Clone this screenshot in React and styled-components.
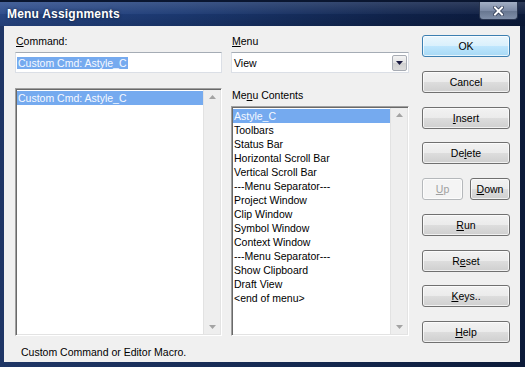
import React from "react";
import styled, { createGlobalStyle } from "styled-components";

const Global = createGlobalStyle`
  html, body {
    margin: 0;
    padding: 0;
    background: #1a2a4c;
  }
  body {
    font-family: "Liberation Sans", Arial, sans-serif;
    font-size: 10.5px;
  }
`;

const Frame = styled.div`
  width: 525px;
  height: 367px;
  box-sizing: border-box;
  display: flex;
  flex-direction: column;
  padding: 0 5px 5px 4px;
  background: linear-gradient(to right, #1f3666, #14284f 60%, #0c1a38);
`;

const TitleBar = styled.div`
  height: 26px;
  flex-shrink: 0;
  margin: 0 -5px 0 -4px;
  padding: 0 7px;
  display: flex;
  align-items: center;
  justify-content: space-between;
  position: relative;
  border-top: 2px solid #0a1630;
  box-sizing: border-box;
  background:
    linear-gradient(to bottom, rgba(255, 255, 255, 0.14), rgba(255, 255, 255, 0.03) 50%, rgba(0, 0, 0, 0.05) 51%, rgba(0, 0, 0, 0.15)),
    linear-gradient(to right, #29498a 0%, #1c3a74 35%, #10244e 75%, #0b1a3c 100%);
`;

const Title = styled.span`
  color: #ffffff;
  font-weight: bold;
  font-size: 12px;
  letter-spacing: 0.2px;
  text-shadow: 0 0 3px rgba(0, 0, 0, 0.6);
`;

const CloseButton = styled.div`
  position: absolute;
  right: 7px;
  top: 0;
  width: 37px;
  height: 17px;
  display: flex;
  align-items: center;
  justify-content: center;
  border: 1px solid #2a3650;
  border-top: none;
  border-radius: 0 0 4px 4px;
  background: linear-gradient(to bottom, #a3afc4, #7d8ba6 50%, #66758f 51%, #7f8ea8);
`;

const Body = styled.div`
  flex: 1;
  min-height: 0;
  background: #f0f0f0;
  display: flex;
  align-items: flex-start;
  padding: 8px 10px 0 11px;
`;

const MainArea = styled.div`
  display: flex;
  flex-direction: column;
  margin-right: 13px;
`;

const Columns = styled.div`
  display: flex;
  align-items: flex-start;
`;

const Column = styled.div`
  width: ${(p) => p.$w}px;
  margin-right: ${(p) => p.$mr || 0}px;
  display: flex;
  flex-direction: column;
`;

const Label = styled.div`
  height: 14px;
  line-height: 14px;
  color: #000;
  margin-top: ${(p) => p.$mt || 0}px;
  margin-bottom: 4px;
  padding-left: 1px;
`;

const TextField = styled.div`
  height: 21px;
  box-sizing: border-box;
  border: 1px solid #dbdfe6;
  border-top-color: #a5acb5;
  background: #fff;
  display: flex;
  align-items: center;
  padding-left: 1px;
`;

const Selected = styled.span`
  background: #75aaef;
  color: #f6f9ff;
  line-height: 12px;
  padding: 0 1px;
`;

const SelectBox = styled(TextField)`
  justify-content: space-between;
  padding: 0 1px 0 2px;
`;

const DropButton = styled.div`
  width: 15px;
  height: 16px;
  box-sizing: border-box;
  border: 1px solid #a8acb4;
  border-radius: 2px;
  background: linear-gradient(to bottom, #f4f4f4, #e2e2e2 50%, #d0d0d0 51%, #dcdcdc);
  display: flex;
  align-items: center;
  justify-content: center;
`;

const ListBox = styled.div`
  height: ${(p) => p.$h}px;
  margin-top: ${(p) => p.$mt || 0}px;
  box-sizing: border-box;
  border: 1px solid;
  border-color: #a0a0a0 #ffffff #ffffff #a0a0a0;
  box-shadow: inset 1px 1px 0 #696969, inset -1px -1px 0 #e3e3e3;
  background: #fff;
  display: flex;
  padding: 1px;
`;

const Items = styled.div`
  flex: 1;
  display: flex;
  flex-direction: column;
  padding-top: 1px;
`;

const Item = styled.div`
  height: 14px;
  line-height: 14px;
  padding-left: 1px;
  white-space: nowrap;
  color: ${(p) => (p.$sel ? "#f6f9ff" : "#000")};
  background: ${(p) => (p.$sel ? "#75aaef" : "transparent")};
`;

const ScrollBar = styled.div`
  width: 16px;
  background: #eeeeee;
  border-left: 1px solid #e2e2e2;
  display: flex;
  flex-direction: column;
  justify-content: space-between;
  align-items: center;
  padding: 5px 0;
`;

const Buttons = styled.div`
  width: 88px;
  margin-top: 1px;
  display: flex;
  flex-direction: column;
  gap: 13.75px;
`;

const ButtonRow = styled.div`
  display: flex;
  justify-content: space-between;
`;

const Button = styled.div`
  width: ${(p) => p.$w || 88}px;
  height: 22px;
  box-sizing: border-box;
  border: 1px solid ${(p) => (p.$default ? "#3c7fb1" : p.$disabled ? "#b5b8bb" : "#707070")};
  border-radius: 3px;
  display: flex;
  align-items: center;
  justify-content: center;
  color: ${(p) => (p.$disabled ? "#a0a0a0" : "#000")};
  box-shadow: inset 0 0 0 1px rgba(255, 255, 255, 0.7);
  background: ${(p) =>
    p.$default
      ? "linear-gradient(to bottom, #eaf6fd, #d9f0fc 50%, #bee6fd 51%, #a7d9f5)"
      : p.$disabled
      ? "#f4f4f4"
      : "linear-gradient(to bottom, #f2f2f2, #ebebeb 50%, #dddddd 51%, #cfcfcf)"};
`;

const Status = styled.div`
  margin-top: 9px;
  height: 14px;
  line-height: 14px;
  padding-left: 6px;
  color: #000;
`;

const Arrow = ({ up, color = "#a3a3a3" }) => (
  <svg width="7" height="4" viewBox="0 0 7 4">
    <path d={up ? "M0 4 L3.5 0 L7 4 Z" : "M0 0 L7 0 L3.5 4 Z"} fill={color} />
  </svg>
);

const contents = [
  "Astyle_C",
  "Toolbars",
  "Status Bar",
  "Horizontal Scroll Bar",
  "Vertical Scroll Bar",
  "---Menu Separator---",
  "Project Window",
  "Clip Window",
  "Symbol Window",
  "Context Window",
  "---Menu Separator---",
  "Show Clipboard",
  "Draft View",
  "<end of menu>",
];

export default function App() {
  return (
    <>
      <Global />
      <Frame>
        <TitleBar>
          <Title>Menu Assignments</Title>
          <CloseButton>
            <svg width="11" height="10" viewBox="0 0 11 10">
              <path d="M2 1.5 L9 8.5 M9 1.5 L2 8.5" stroke="#2b3650" strokeWidth="3.6" strokeLinecap="square" />
              <path d="M2 1.5 L9 8.5 M9 1.5 L2 8.5" stroke="#ffffff" strokeWidth="2" strokeLinecap="square" />
            </svg>
          </CloseButton>
        </TitleBar>
        <Body>
          <MainArea>
            <Columns>
              <Column $w={207} $mr={9}>
                <Label>
                  <u>C</u>ommand:
                </Label>
                <TextField>
                  <Selected>Custom Cmd: Astyle_C</Selected>
                </TextField>
                <ListBox $h={248} $mt={15}>
                  <Items>
                    <Item $sel>Custom Cmd: Astyle_C</Item>
                  </Items>
                  <ScrollBar>
                    <Arrow up />
                    <Arrow />
                  </ScrollBar>
                </ListBox>
              </Column>
              <Column $w={178}>
                <Label>
                  <u>M</u>enu
                </Label>
                <SelectBox>
                  <span>View</span>
                  <DropButton>
                    <Arrow color="#1a1a40" />
                  </DropButton>
                </SelectBox>
                <Label $mt={15}>
                  Me<u>n</u>u Contents
                </Label>
                <ListBox $h={230}>
                  <Items>
                    {contents.map((c, i) => (
                      <Item key={i} $sel={i === 0}>
                        {c}
                      </Item>
                    ))}
                  </Items>
                  <ScrollBar>
                    <Arrow up />
                    <Arrow />
                  </ScrollBar>
                </ListBox>
              </Column>
            </Columns>
            <Status>Custom Command or Editor Macro.</Status>
          </MainArea>
          <Buttons>
            <Button $default>OK</Button>
            <Button>Cancel</Button>
            <Button>
              <span><u>I</u>nsert</span>
            </Button>
            <Button>
              <span>De<u>l</u>ete</span>
            </Button>
            <ButtonRow>
              <Button $w={41} $disabled>
                <span><u>U</u>p</span>
              </Button>
              <Button $w={40}>
                <span><u>D</u>own</span>
              </Button>
            </ButtonRow>
            <Button>
              <span><u>R</u>un</span>
            </Button>
            <Button>
              <span>R<u>e</u>set</span>
            </Button>
            <Button>
              <span><u>K</u>eys..</span>
            </Button>
            <Button>
              <span><u>H</u>elp</span>
            </Button>
          </Buttons>
        </Body>
      </Frame>
    </>
  );
}
